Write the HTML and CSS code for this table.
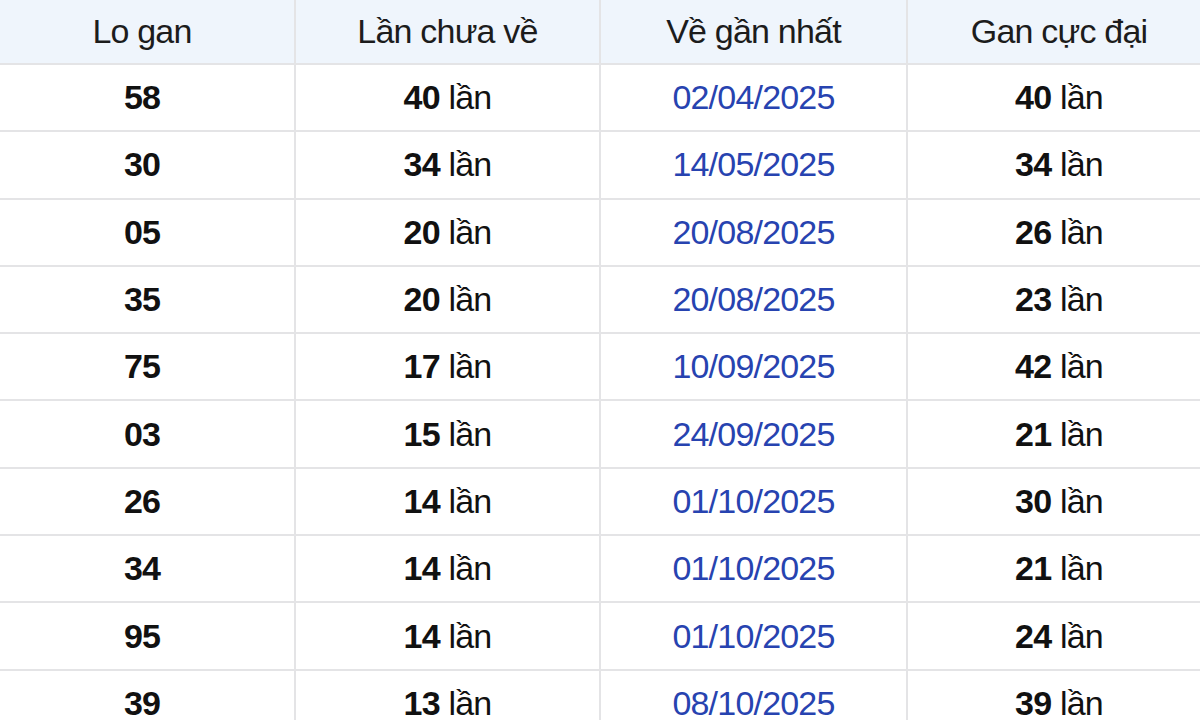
FILE: index.html
```html
<!DOCTYPE html>
<html lang="vi">
<head>
<meta charset="utf-8">
<link rel="stylesheet" href="styles.css">
</head>
<body>
<table class="gan-table">
  <colgroup>
    <col class="c1"><col class="c2"><col class="c3"><col class="c4">
  </colgroup>
  <thead>
    <tr><th>Lo gan</th><th>Lần chưa về</th><th>Về gần nhất</th><th>Gan cực đại</th></tr>
  </thead>
  <tbody>
    <tr><td class="num">58</td><td><b>40</b> lần</td><td class="date">02/04/2025</td><td><b>40</b> lần</td></tr>
    <tr><td class="num">30</td><td><b>34</b> lần</td><td class="date">14/05/2025</td><td><b>34</b> lần</td></tr>
    <tr><td class="num">05</td><td><b>20</b> lần</td><td class="date">20/08/2025</td><td><b>26</b> lần</td></tr>
    <tr><td class="num">35</td><td><b>20</b> lần</td><td class="date">20/08/2025</td><td><b>23</b> lần</td></tr>
    <tr><td class="num">75</td><td><b>17</b> lần</td><td class="date">10/09/2025</td><td><b>42</b> lần</td></tr>
    <tr><td class="num">03</td><td><b>15</b> lần</td><td class="date">24/09/2025</td><td><b>21</b> lần</td></tr>
    <tr><td class="num">26</td><td><b>14</b> lần</td><td class="date">01/10/2025</td><td><b>30</b> lần</td></tr>
    <tr><td class="num">34</td><td><b>14</b> lần</td><td class="date">01/10/2025</td><td><b>21</b> lần</td></tr>
    <tr><td class="num">95</td><td><b>14</b> lần</td><td class="date">01/10/2025</td><td><b>24</b> lần</td></tr>
    <tr><td class="num">39</td><td><b>13</b> lần</td><td class="date">08/10/2025</td><td><b>39</b> lần</td></tr>
  </tbody>
</table>
</body>
</html>
```
FILE: styles.css
```css
html, body {
  margin: 0;
  padding: 0;
  background: #ffffff;
  overflow: hidden;
}
.gan-table {
  width: 1220px;
  margin-left: -10px;
  border-collapse: collapse;
  table-layout: fixed;
  font-family: "Liberation Sans", Arial, sans-serif;
  font-size: 34px;
  letter-spacing: -0.8px;
  color: #111;
}
.c1 { width: 305px; }
.c2 { width: 305px; }
.c3 { width: 307px; }
.c4 { width: 303px; }
.gan-table th,
.gan-table td {
  text-align: center;
  vertical-align: middle;
  padding: 0;
  border: 2px solid #e4e4e6;
  border-top: none;
}
.gan-table th:first-child,
.gan-table td:first-child { border-left: none; }
.gan-table th:last-child,
.gan-table td:last-child { border-right: none; }
.gan-table thead tr {
  height: 64px;
  background: #eff5fc;
}
.gan-table th {
  font-weight: normal;
  color: #1c1c1c;
  padding-bottom: 1px;
}
.gan-table tbody tr { height: 67.3px; }
.gan-table td.num { font-weight: bold; }
.gan-table td b { font-weight: bold; }
.gan-table td.date { color: #2743b0; }
```
